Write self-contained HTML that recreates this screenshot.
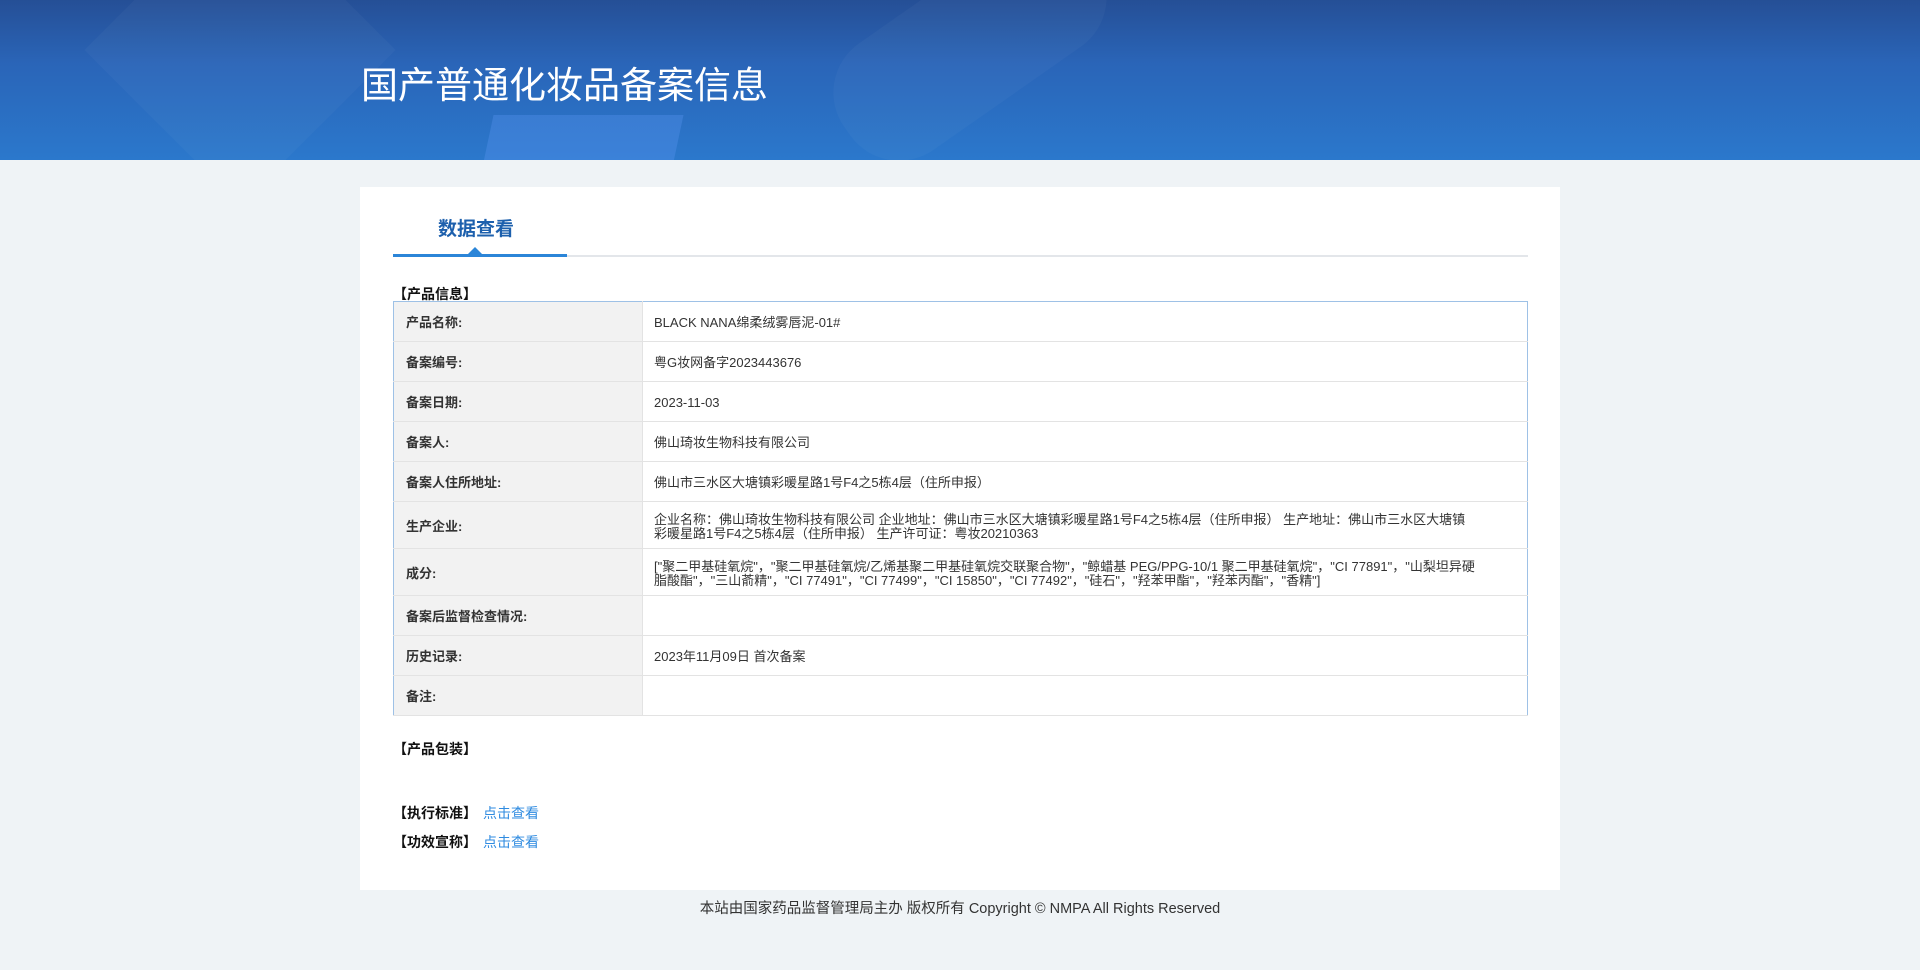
<!DOCTYPE html>
<html><head><meta charset="utf-8">
<style>
*{margin:0;padding:0;box-sizing:border-box}
body{width:1920px;height:970px;background:#eff3f6;font-family:"Liberation Sans","Noto Sans CJK SC",sans-serif;color:#333;position:relative;overflow:hidden}
.hd{position:absolute;left:0;top:0;width:1920px;height:160px;background:linear-gradient(180deg,#254f96 0%,#2a65b8 40%,#2b78cc 100%);overflow:hidden}
.hd .s1{position:absolute;left:130px;top:-60px;width:220px;height:220px;background:rgba(255,255,255,0.03);transform:rotate(45deg)}
.hd .s2{position:absolute;left:485px;top:115px;width:190px;height:80px;background:rgba(90,150,240,0.35);transform:skewX(-12deg)}
.hd .s3{position:absolute;left:820px;top:-20px;width:300px;height:130px;background:rgba(255,255,255,0.03);border-radius:60px;transform:rotate(-35deg)}
.hd h1{position:absolute;left:361px;top:63px;font-size:37px;font-weight:normal;color:#fff;line-height:46px}
.card{position:absolute;left:360px;top:187px;width:1200px;height:703px;background:#fff}
.tab{position:absolute;left:78px;top:27px;font-size:19px;font-weight:bold;color:#1d60ad}
.tline{position:absolute;left:33px;top:68px;width:1135px;height:2px;background:#e3e6ea}
.tact{position:absolute;left:33px;top:67px;width:174px;height:3px;background:#2b85d8}
.tri{position:absolute;left:108px;top:60px;width:0;height:0;border-left:7px solid transparent;border-right:7px solid transparent;border-bottom:7px solid #2b85d8}
.sec{position:absolute;left:33px;font-size:14px;font-weight:bold;color:#111}
table{position:absolute;left:33px;top:114px;width:1135px;border-collapse:collapse;border:1px solid #9ec1e6;font-size:13px}
td{border-bottom:1px solid #e3e3e3;height:40px;vertical-align:middle;line-height:14px;padding-top:3px}
td.l{width:249px;background:#f2f2f2;font-weight:bold;padding-left:12px;color:#333;border-right:1px solid #e3e3e3}
td.v{padding-left:11px;padding-right:50px;color:#333}
tr.t td{height:47px}
.lk{color:#2f8be0;font-weight:normal;margin-left:6px}
.ft{position:absolute;left:0;width:1920px;top:897px;text-align:center;font-size:14.5px;color:#333}
</style></head><body>
<div class="hd"><div class="s1"></div><div class="s2"></div><div class="s3"></div><h1>国产普通化妆品备案信息</h1></div>
<div class="card">
<div class="tab">数据查看</div>
<div class="tline"></div><div class="tact"></div><div class="tri"></div>
<div class="sec" style="top:97px">【产品信息】</div>
<table>
<tr><td class="l">产品名称:</td><td class="v">BLACK NANA绵柔绒雾唇泥-01#</td></tr>
<tr><td class="l">备案编号:</td><td class="v">粤G妆网备字2023443676</td></tr>
<tr><td class="l">备案日期:</td><td class="v">2023-11-03</td></tr>
<tr><td class="l">备案人:</td><td class="v">佛山琦妆生物科技有限公司</td></tr>
<tr><td class="l">备案人住所地址:</td><td class="v">佛山市三水区大塘镇彩暖星路1号F4之5栋4层（住所申报）</td></tr>
<tr class="t"><td class="l">生产企业:</td><td class="v">企业名称：佛山琦妆生物科技有限公司 企业地址：佛山市三水区大塘镇彩暖星路1号F4之5栋4层（住所申报） 生产地址：佛山市三水区大塘镇彩暖星路1号F4之5栋4层（住所申报） 生产许可证：粤妆20210363</td></tr>
<tr class="t"><td class="l">成分:</td><td class="v">["聚二甲基硅氧烷"，"聚二甲基硅氧烷/乙烯基聚二甲基硅氧烷交联聚合物"，"鲸蜡基 PEG/PPG-10/1 聚二甲基硅氧烷"，"CI 77891"，"山梨坦异硬脂酸酯"，"三山萮精"，"CI 77491"，"CI 77499"，"CI 15850"，"CI 77492"，"硅石"，"羟苯甲酯"，"羟苯丙酯"，"香精"]</td></tr>
<tr><td class="l">备案后监督检查情况:</td><td class="v"></td></tr>
<tr><td class="l">历史记录:</td><td class="v">2023年11月09日 首次备案</td></tr>
<tr><td class="l">备注:</td><td class="v"></td></tr>
</table>
<div class="sec" style="top:552px">【产品包装】</div>
<div class="sec" style="top:616px">【执行标准】<span class="lk">点击查看</span></div>
<div class="sec" style="top:645px">【功效宣称】<span class="lk">点击查看</span></div>
</div>
<div class="ft">本站由国家药品监督管理局主办 版权所有 Copyright © NMPA All Rights Reserved</div>
</body></html>
